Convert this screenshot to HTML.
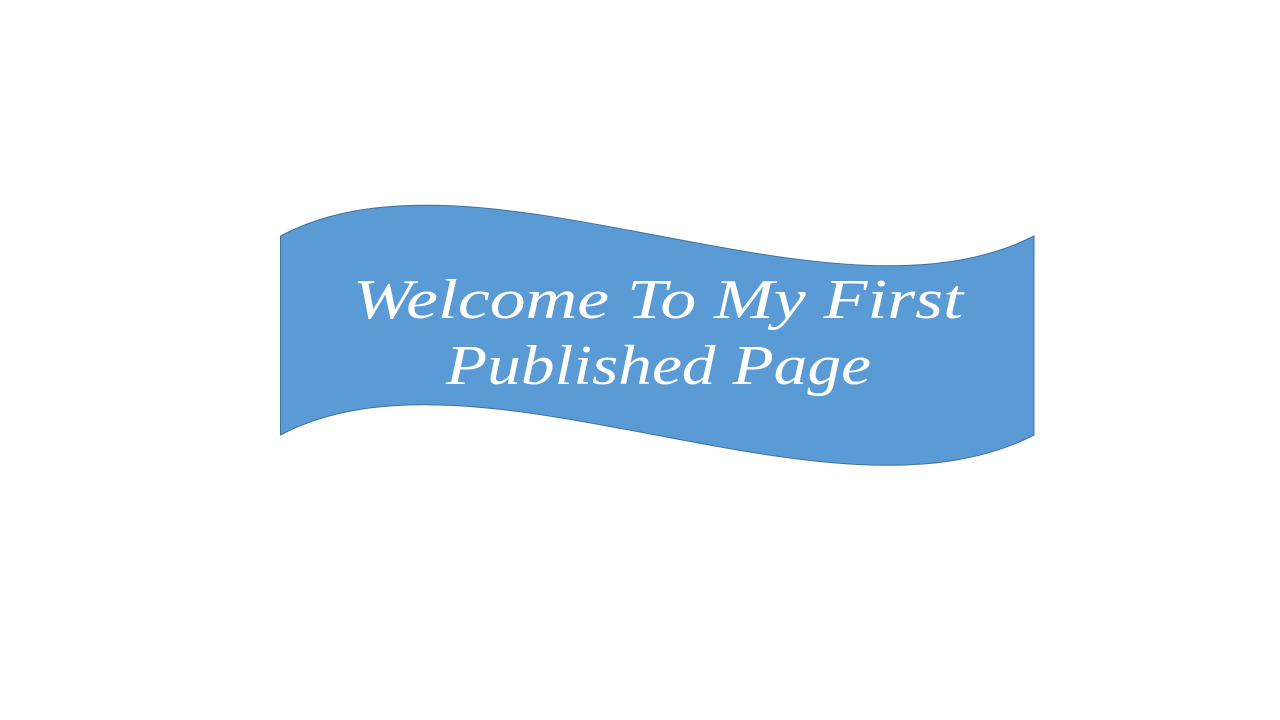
<!DOCTYPE html>
<html><head><style>html,body{margin:0;padding:0;background:#fff;width:1280px;height:720px;overflow:hidden}</style></head>
<body>
<svg width="1280" height="720" viewBox="0 0 1280 720" xmlns="http://www.w3.org/2000/svg">
<path d="M280.5,236 C480,130 830,340 1034,236 L1034,435 C830,540 480,330 280.5,435 Z" fill="#5B9BD5" stroke="#41719C" stroke-width="1"/>
<g font-family="Liberation Serif, serif" font-style="italic" font-size="56" fill="#fff">
<text x="353" y="318" textLength="610" lengthAdjust="spacingAndGlyphs">Welcome To My First</text>
<text x="446" y="384" textLength="425" lengthAdjust="spacingAndGlyphs">Published Page</text>
</g>
</svg>
</body></html>
